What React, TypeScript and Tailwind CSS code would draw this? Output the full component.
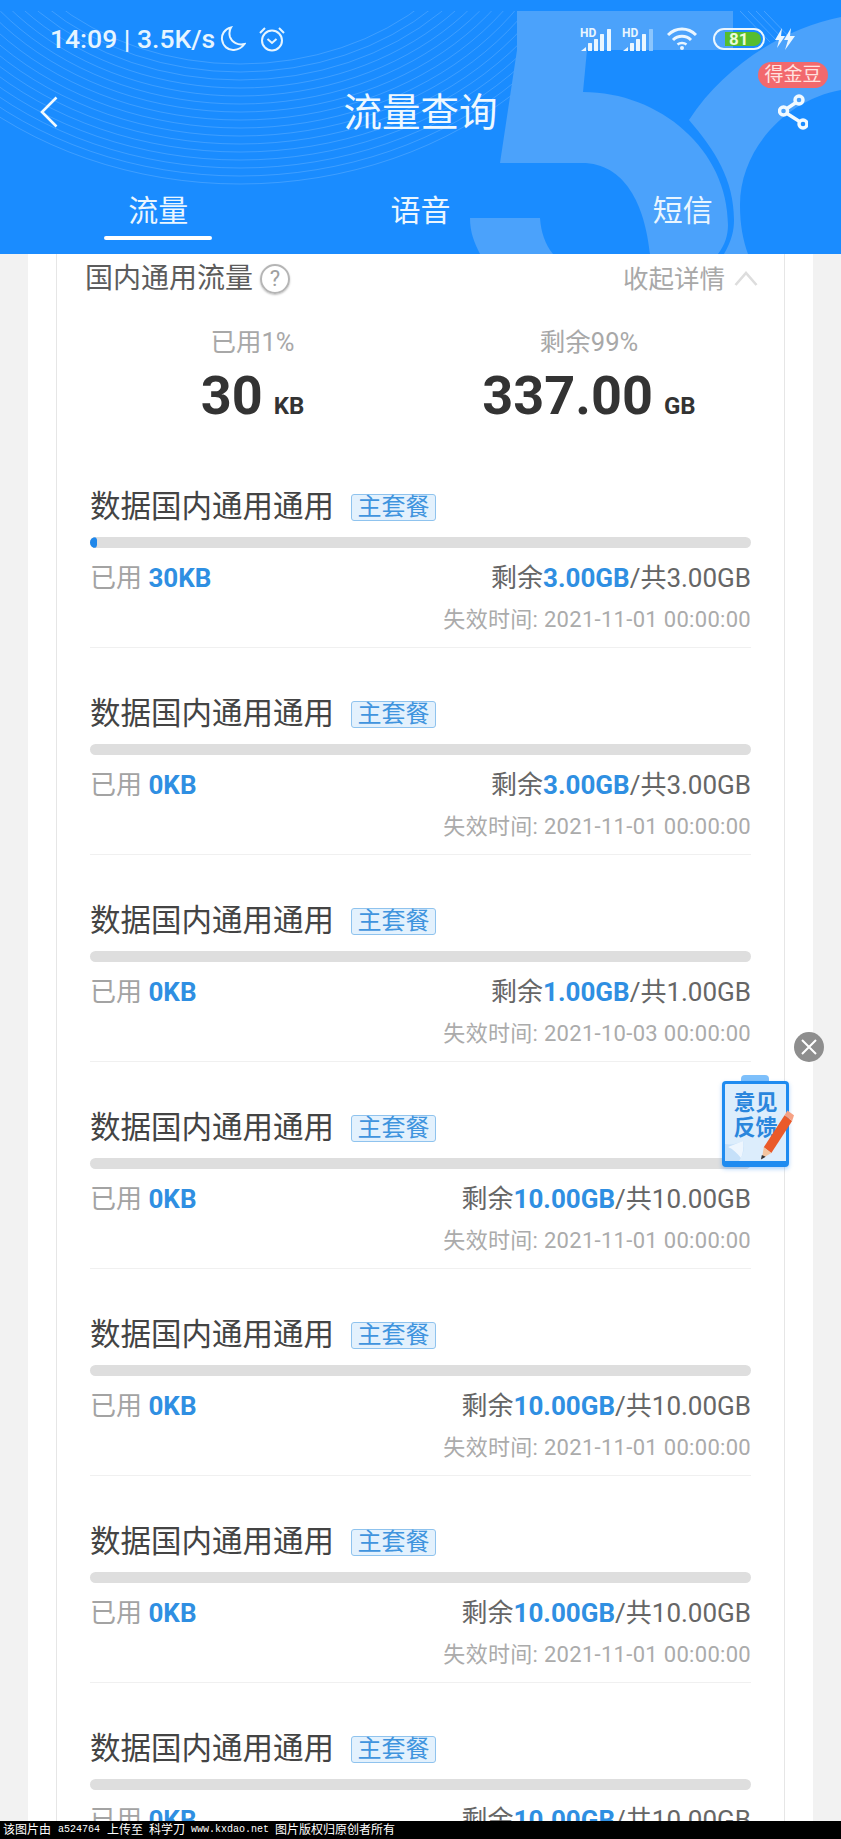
import React from "react";

const rows = [
  { used: "30KB", left: "3.00GB", total: "3.00GB", exp: "2021-11-01", pct: true },
  { used: "0KB", left: "3.00GB", total: "3.00GB", exp: "2021-11-01" },
  { used: "0KB", left: "1.00GB", total: "1.00GB", exp: "2021-10-03" },
  { used: "0KB", left: "10.00GB", total: "10.00GB", exp: "2021-11-01" },
  { used: "0KB", left: "10.00GB", total: "10.00GB", exp: "2021-11-01" },
  { used: "0KB", left: "10.00GB", total: "10.00GB", exp: "2021-11-01" },
  { used: "0KB", left: "10.00GB", total: "10.00GB", exp: "2021-11-01" },
];

function HeaderArt() {
  const arcs = Array.from({ length: 16 }, (_, i) => i);
  return (
    <svg className="absolute inset-0" width="841" height="254" viewBox="0 0 841 254" fill="none">
      <defs>
        <clipPath id="band">
          <rect x="0" y="11" width="841" height="243" />
        </clipPath>
      </defs>
      <g clipPath="url(#band)">
        {arcs.map((i) => (
          <ellipse
            key={i}
            cx="240"
            cy={-150}
            rx={400 - i * 9}
            ry={334 - i * 8}
            stroke="#ffffff"
            strokeOpacity={0.16}
            strokeWidth="1"
          />
        ))}
        {[0, 1, 2, 3].map((i) => (
          <path key={i} d={`M${740 + i * 8} 11 L${770 + i * 8} 42`} stroke="#fff" strokeOpacity="0.2" />
        ))}
        <path
          d="M517 5 H733 V50 H587 L583 92 C660 92 728 150 728 225 C728 235 725 245 718 254 H650 C645 205 625 163 582 163 H500 L517 50 Z M470 218 H540 C541 232 545 244 553 254 H480 C474 242 470 232 470 218 Z"
          fill="#4ba2fb"
        />
        <path
          d="M689 120 C725 65 785 28 841 17 V90 C785 100 740 150 740 205 C740 225 743 240 748 254 H724 C732 240 734 230 734 220 C734 180 715 150 689 120 Z"
          fill="#4ba2fb"
        />
      </g>
    </svg>
  );
}

function Signal({ faded }: { faded?: boolean }) {
  return (
    <svg width="33" height="25" viewBox="0 0 33 25">
      <text x="0" y="10" fontSize="12" fontWeight="700" fill="#eaf6ff" fontFamily="Roboto, sans-serif">HD</text>
      <path d="M1 24 L6 20 V24 Z" fill="#eaf6ff" />
      <rect x="8" y="16" width="4" height="8" fill="#eaf6ff" rx="0.5" />
      <rect x="14" y="12" width="4" height="12" fill="#eaf6ff" rx="0.5" />
      <rect x="20" y="7" width="4" height="17" fill="#eaf6ff" rx="0.5" />
      <rect x="27" y="2" width="4" height="22" fill={faded ? "#8cc6fd" : "#eaf6ff"} rx="0.5" />
    </svg>
  );
}

function Row({ r }: { r: (typeof rows)[number] }) {
  return (
    <div className="h-[207px] shrink-0 border-b border-[#f0f0f0] pt-[48px] box-border">
      <div className="flex items-center h-[36px]">
        <span className="text-[30.5px] leading-[36px] text-[#444444]">数据国内通用通用</span>
        <span className="ml-[17px] w-[85px] h-[27px] flex items-center justify-center rounded-[3px] border border-[#8fc3ee] bg-[#e3f1fd] text-[24px] leading-[25px] text-[#4094de]">
          主套餐
        </span>
      </div>
      <div className="mt-[12px] h-[11px] rounded-full bg-[#dedede] overflow-hidden">
        {r.pct ? <div className="w-[7px] h-full rounded-full bg-[#1f87ea]" /> : null}
      </div>
      <div className="mt-[13px] flex items-center justify-between h-[34px] text-[26px] leading-[34px]">
        <span className="text-[#a3a3a3]">
          已用 <span className="font-bold text-[#2f8fe2]">{r.used}</span>
        </span>
        <span className="text-[#666666]">
          剩余<span className="font-bold text-[#2f8fe2]">{r.left}</span>/共{r.total}
        </span>
      </div>
      <div className="mt-[10px] text-right text-[22px] leading-[30px] text-[#ababab] tracking-[0.3px]">
        失效时间: {r.exp} 00:00:00
      </div>
    </div>
  );
}

export default function App() {
  return (
    <div className="w-[841px] h-[1839px] flex flex-col overflow-hidden relative bg-[#f2f2f2] [font-family:Roboto,'Noto_Sans_CJK_SC',sans-serif]">
      <header className="relative h-[254px] shrink-0 bg-[#1a8cff] text-white overflow-hidden">
        <HeaderArt />
        <div className="relative h-[78px] pl-[50px] pr-[46px] flex items-center justify-between text-[#e6f5ff]">
          <div className="flex items-center">
            <span className="text-[26.5px] font-medium leading-[30px]">14:09 | 3.5K/s</span>
            <svg className="ml-[5px]" width="26" height="26" viewBox="0 0 26 26" fill="none" stroke="currentColor" strokeWidth="2">
              <path d="M11 1.5 C4 3 1.5 9 2 13.5 C2.8 20 8 24.5 14 24 C18.5 23.7 22 21.5 24.5 18 C18 19.5 12 16.5 10 11 C9 7.5 9.5 4 11 1.5 Z" />
            </svg>
            <svg className="ml-[12px]" width="28" height="28" viewBox="0 0 28 28" fill="none" stroke="currentColor" strokeWidth="2">
              <circle cx="14" cy="15.5" r="10" />
              <path d="M9.5 14 L14 18 L18.5 14" />
              <path d="M2 8 L7 3 M21 3 L26 8" />
            </svg>
          </div>
          <div className="flex items-center">
            <Signal />
            <div className="ml-[9px]"><Signal faded /></div>
            <svg className="ml-[12px]" width="30" height="24" viewBox="0 0 30 24" fill="none" stroke="#eaf6ff" strokeWidth="3">
              <path d="M1 8 C9 0 21 0 29 8" />
              <path d="M6 13 C11 8 19 8 24 13" />
              <path d="M10.5 17.5 C13 15.5 17 15.5 19.5 17.5" strokeWidth="2.5" />
              <circle cx="15" cy="21" r="2" fill="#eaf6ff" stroke="none" />
            </svg>
            <div className="ml-[16px] w-[52px] h-[22px] rounded-full border-2 border-[#eaf6ff] p-[2px] flex">
              <div className="w-[38px] h-full ml-[8px] rounded-r-full bg-[#56bd2e] flex items-center justify-start text-[17px] font-bold leading-none text-[#eafbd8]">
                <span className="pl-[4px]">81</span>
              </div>
            </div>
            <svg className="ml-[10px]" width="20" height="22" viewBox="0 0 20 22" fill="#eaf6ff">
              <path d="M7 0 L0 12 H4 L2 20 L10 8 H6 Z" />
              <path d="M16 0 L9 12 H13 L10 22 L20 8 H15 Z" />
            </svg>
          </div>
        </div>
        <div className="relative h-[68px] pl-[40px] pr-[33px] flex items-center justify-between">
          <svg width="18" height="32" viewBox="0 0 18 32" fill="none" stroke="#f2faff" strokeWidth="2.6">
            <path d="M16.5 1.5 L2 16 L16.5 30.5" />
          </svg>
          <span className="absolute left-0 right-0 top-[13px] text-center text-[38.5px] leading-[44px] text-[#eef8ff]">流量查询</span>
          <svg width="30" height="36" viewBox="0 0 30 36" fill="none" stroke="#f2faff" strokeWidth="3.4">
            <circle cx="21" cy="6" r="4" />
            <circle cx="5.5" cy="17" r="4" />
            <circle cx="25" cy="30" r="4" />
            <path d="M18 8.5 L9 14.5 M9 19.5 L21.5 27.5" />
          </svg>
          <span className="absolute right-[13px] top-[-16px] w-[70px] h-[26px] rounded-full bg-[#f2696d] text-center text-[19px] leading-[26px] text-[#ffe2e0]">
            得金豆
          </span>
        </div>
        <div className="relative grid grid-cols-3 px-[27px] text-[30px] leading-[40px] text-[#eaf6ff]">
          <div className="flex flex-col items-center pt-[45px]">
            <span>流量</span>
            <div className="mt-[5px] w-[108px] h-[4px] rounded-full bg-white" />
          </div>
          <div className="flex flex-col items-center pt-[45px]">
            <span>语音</span>
          </div>
          <div className="flex flex-col items-center pt-[45px]">
            <span>短信</span>
          </div>
        </div>
      </header>

      <main className="flex-1 min-h-0 overflow-hidden ml-[28px] mr-[28px] bg-white px-[28px]">
        <div className="h-full border-x border-[#e6e6e6] pl-[33px] pr-[33px] overflow-hidden">
          <div className="ml-[-5px] mr-[-7px] flex items-center justify-between h-[49px]">
            <div className="flex items-center">
              <span className="text-[28px] leading-[36px] text-[#5c5c5c]">国内通用流量</span>
              <span className="ml-[7px] w-[30px] h-[30px] rounded-full border-2 border-[#b5b5b5] shadow-[0_1px_2px_rgba(0,0,0,0.25)] flex items-center justify-center text-[22px] leading-none text-[#a0a0a0]">?</span>
            </div>
            <div className="flex items-center">
              <span className="text-[25.5px] leading-[32px] text-[#a8a8a8]">收起详情</span>
              <svg className="ml-[9px]" width="24" height="15" viewBox="0 0 24 15" fill="none" stroke="#dddddd" strokeWidth="2.6">
                <path d="M1.5 14 L12 2 L22.5 14" />
              </svg>
            </div>
          </div>
          <div className="flex mt-[23px] ml-[-33px] mr-[-33px]">
            <div className="w-[391px] flex flex-col items-center">
              <span className="text-[25.5px] leading-[32px] text-[#a8a8a8]">已用1%</span>
              <div className="mt-[8px] flex items-baseline text-[#333333] font-bold leading-[60px]">
                <span className="text-[54px]">30</span>
                <span className="ml-[11px] text-[24px]">KB</span>
              </div>
            </div>
            <div className="flex-1 pr-[54px] flex flex-col items-center">
              <span className="text-[25.5px] leading-[32px] text-[#a8a8a8]">剩余99%</span>
              <div className="mt-[8px] flex items-baseline text-[#333333] font-bold leading-[60px]">
                <span className="text-[54px]">337.00</span>
                <span className="ml-[11px] text-[24px]">GB</span>
              </div>
            </div>
          </div>
          <div className="h-[5px]" />
          {rows.map((r, i) => (
            <Row key={i} r={r} />
          ))}
        </div>
      </main>

      <div className="absolute left-[794px] top-[1032px] w-[30px] h-[30px] rounded-full bg-[#8e8e8e] flex items-center justify-center">
        <svg width="18" height="18" viewBox="0 0 18 18" stroke="#ffffff" strokeWidth="2">
          <path d="M2 2 L16 16 M16 2 L2 16" />
        </svg>
      </div>
      <div className="absolute left-[722px] top-[1075px] w-[72px] h-[96px]">
        <div className="absolute left-[19px] top-0 w-[28px] h-[10px] rounded-t-[4px] bg-[#7ec0fb]" />
        <div className="absolute left-0 top-[6px] w-[67px] h-[86px] rounded-[4px] border-[3px] border-b-[6px] border-[#1f8bf0] bg-[#dcedfc] shadow-[0_2px_4px_rgba(30,130,240,0.35)]" />
        <svg className="absolute left-[3px] top-[66px]" width="20" height="20" viewBox="0 0 20 20">
          <path d="M0 3 C6 4 12 3 18 0 C20 8 18 14 14 20 H0 Z" fill="#c5e0f9" />
          <path d="M18 0 C19 7 18 12 16 17 C12 12 8 8 3 6 Z" fill="#eef6fe" />
        </svg>
        <div className="absolute left-[11px] top-[15px] w-[45px] text-[22px] leading-[25px] font-bold text-center text-[#2a86dd]">
          意见反馈
        </div>
        <svg className="absolute left-[38px] top-[34px]" width="34" height="54" viewBox="0 0 36 56">
          <path d="M4 40 L26 6 L34 12 L12 46 Z" fill="#ea5a2a" />
          <path d="M26 6 L29 1 L36 6 L34 12 Z" fill="#f6a184" />
          <path d="M4 40 L12 46 L2 52 Z" fill="#f3c49f" />
          <path d="M2 48 L6 50 L1 53 Z" fill="#333333" />
        </svg>
      </div>

      <footer className="h-[18px] shrink-0 bg-black text-white text-[12px] leading-[18px] pl-[3px] whitespace-nowrap flex items-center">
        <span>该图片由</span>
        <span className="ml-[7px] text-[10px] [font-family:'Liberation_Mono',monospace]">a524764</span>
        <span className="ml-[7px]">上传至</span>
        <span className="ml-[6px]">科学刀</span>
        <span className="ml-[6px] text-[10px] [font-family:'Liberation_Mono',monospace]">www.kxdao.net</span>
        <span className="ml-[6px]">图片版权归原创者所有</span>
      </footer>
    </div>
  );
}
